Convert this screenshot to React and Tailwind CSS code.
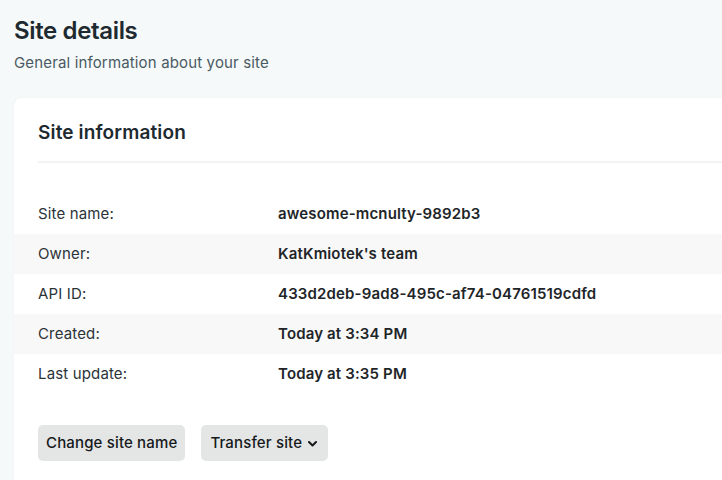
const rows = [
  { label: 'Site name:', value: 'awesome-mcnulty-9892b3' },
  { label: 'Owner:', value: "KatKmiotek's team" },
  { label: 'API ID:', value: '433d2deb-9ad8-495c-af74-04761519cdfd' },
  { label: 'Created:', value: 'Today at 3:34 PM' },
  { label: 'Last update:', value: 'Today at 3:35 PM' },
];

export default function App() {
  return (
    <div className="h-[480px] overflow-hidden bg-[#f5f9f9] pl-[14px] pt-[16px] font-['Inter',sans-serif] text-[#1e2a30]">
      <h1 className="text-[24px] font-semibold leading-[30px] tracking-[-0.35px]">Site details</h1>
      <p className="mt-[7px] text-[15px] leading-[20px] tracking-[0.15px] text-[#4a5a63]">General information about your site</p>

      <section className="mt-[25px] w-[760px] rounded-[8px] bg-white pb-[40px] shadow-[0_0_2px_rgba(0,0,0,0.06)]">
        <div className="mx-[24px] border-b-2 border-[#f2f3f3] pb-[15px] pt-[22px]">
          <h2 className="text-[19px] font-semibold leading-[26px] tracking-[0.15px]">Site information</h2>
        </div>

        <dl className="mt-[31px]">
          {rows.map((r, i) => (
            <div key={r.label} className={`flex h-[40px] items-center px-[24px] text-[15px] tracking-[0.15px] ${i % 2 === 1 ? 'bg-[#f8f8f8]' : ''}`}>
              <dt className="w-[240px] text-[#2b3338]">{r.label}</dt>
              <dd className="font-semibold text-[#1e2528]">{r.value}</dd>
            </div>
          ))}
        </dl>

        <div className="mt-[31px] flex gap-[16px] px-[24px]">
          <button className="h-[36px] rounded-[5px] bg-[#e4e6e6] px-[8px] text-[15px] font-medium tracking-[0.15px] text-[#15191b]">
            Change site name
          </button>
          <button className="flex h-[36px] items-center gap-[6px] rounded-[5px] bg-[#e4e6e6] pl-[9px] pr-[11px] text-[15px] font-medium tracking-[0.15px] text-[#15191b]">
            Transfer site
            <svg width="9" height="6" viewBox="0 0 9 6" className="mt-[2px]">
              <path d="M1 1l3.5 3.5L8 1" fill="none" stroke="currentColor" strokeWidth="2" strokeLinecap="round" strokeLinejoin="round" />
            </svg>
          </button>
        </div>
      </section>
    </div>
  );
}
